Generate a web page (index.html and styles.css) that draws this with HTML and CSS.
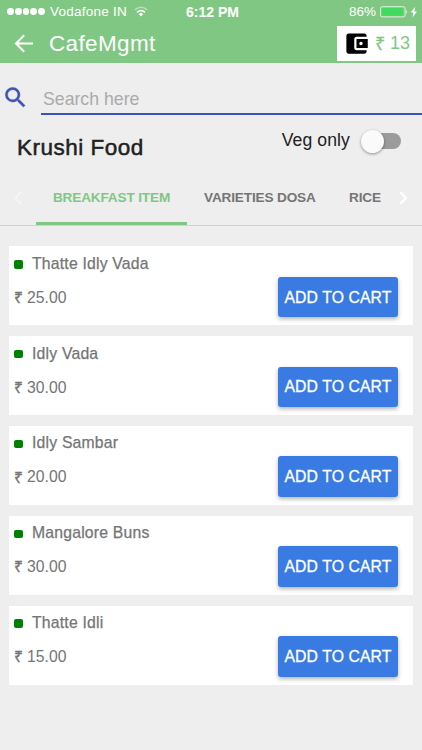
FILE: index.html
```html
<!DOCTYPE html>
<html lang="en">
<head>
<meta charset="utf-8">
<title>CafeMgmt</title>
<link rel="stylesheet" href="styles.css">
</head>
<body>
<header class="header">
  <div class="status">
    <div class="carrier">
      <span class="dots"><i></i><i></i><i></i><i></i><i></i></span>
      <span>Vodafone IN</span>
      <svg class="wifi" width="14" height="11" viewBox="0 0 14 11" fill="none" stroke="#fff" stroke-width="1.5"><path d="M.8 3.8Q7-1.2 13.2 3.8" opacity=".45"/><path d="M3 6.3Q7 3 11 6.3"/><path d="M4.7 8Q7 6.2 9.3 8L7 10.4z" fill="#fff" stroke="none"/></svg>
    </div>
    <div class="clock">6:12 PM</div>
    <div class="power">
      <span>86%</span>
      <svg width="38" height="12" viewBox="0 0 38 12"><rect x=".5" y=".7" width="24.6" height="10.2" rx="1.8" fill="none" stroke="#fff" stroke-opacity=".75"/><rect x="1.7" y="1.9" width="21" height="7.8" rx=".8" fill="#42d95f"/><path d="M26.2 3.800q1.800 2 0 4z" fill="#fff" opacity=".85"/><path d="M35.300.8l-4.600 5.800h2.700l-1 4.800 4.600-6h-2.700z" fill="#fff"/></svg>
    </div>
  </div>
  <div class="toolbar">
    <svg class="back" width="20" height="20" viewBox="0 0 20 20" fill="none" stroke="#fff" stroke-width="2"><path d="M19 10.500H2.500M10.200 2.300L2 10.500l8.200 8.200"/></svg>
    <h1 class="title">CafeMgmt</h1>
    <div class="wallet">
      <svg width="27" height="27" viewBox="0 0 24 24"><path d="M21 18v1c0 1.1-.9 2-2 2H5c-1.11 0-2-.9-2-2V5c0-1.1.89-2 2-2h14c1.1 0 2 .9 2 2v1h-9c-1.11 0-2 .9-2 2v8c0 1.1.89 2 2 2h9zm-9-2h10V8H12v8zm4-2.500c-.83 0-1.500-.67-1.500-1.500s.67-1.500 1.500-1.500 1.500.67 1.500 1.500-.67 1.500-1.500 1.500z"/></svg>
      <span class="balance"><span class="rs">₹</span>13</span>
    </div>
  </div>
</header>
<main>
  <div class="search">
    <svg width="27" height="27" viewBox="0 0 24 24" fill="#3f51b5" stroke="#3f51b5" stroke-width=".4"><path d="M15.500 14h-.79l-.28-.27A6.471 6.471 0 0 0 16 9.500 6.500 6.500 0 1 0 9.500 16c1.610 0 3.090-.59 4.230-1.570l.27.28v.79l5 4.990L20.490 19l-4.990-5zm-6 0C7.010 14 5 11.990 5 9.500S7.010 5 9.500 5 14 7.010 14 9.500 11.990 14 9.500 14z"/></svg>
    <div class="field">Search here</div>
  </div>
  <div class="shop">
    <h2 class="shop-name">Krushi Food</h2>
    <div class="veg"><span>Veg only</span><span class="switch"><i class="thumb"></i></span></div>
  </div>
  <nav class="tabs">
    <svg class="prev" width="8" height="14" viewBox="0 0 8 14" fill="none" stroke="#f5f5f5" stroke-width="2"><path d="M7 1L1.500 7 7 13"/></svg>
    <div class="tab active">BREAKFAST ITEM</div>
    <div class="tab dosa">VARIETIES DOSA</div>
    <div class="tab rice">RICE</div>
    <svg class="next" width="9" height="14" viewBox="0 0 9 14" fill="none" stroke="#fff" stroke-width="2.200"><path d="M1.500 1.300L7 7l-5.500 5.700"/></svg>
  </nav>
  <section class="menu">
    <article class="item"><div><h3 class="name">Thatte Idly Vada</h3><p class="price"><span class="rs">₹</span>25.00</p></div><button class="add">ADD TO CART</button></article>
    <article class="item"><div><h3 class="name">Idly Vada</h3><p class="price"><span class="rs">₹</span>30.00</p></div><button class="add">ADD TO CART</button></article>
    <article class="item"><div><h3 class="name">Idly Sambar</h3><p class="price"><span class="rs">₹</span>20.00</p></div><button class="add">ADD TO CART</button></article>
    <article class="item"><div><h3 class="name">Mangalore Buns</h3><p class="price"><span class="rs">₹</span>30.00</p></div><button class="add">ADD TO CART</button></article>
    <article class="item"><div><h3 class="name">Thatte Idli</h3><p class="price"><span class="rs">₹</span>15.00</p></div><button class="add">ADD TO CART</button></article>
  </section>
</main>
</body>
</html>
```
FILE: styles.css
```css
* { box-sizing: border-box; margin: 0; padding: 0; }
body {
  width: 422px;
  height: 750px;
  overflow: hidden;
  background: #eee;
  font-family: "Liberation Sans", Arial, sans-serif;
  color: #212121;
  white-space: nowrap;
}
svg { display: block; flex: none; }
.header { height: 63px; background: #81c784; color: #fff; }
.status {
  height: 23px;
  display: grid;
  grid-template-columns: 1fr 54px 1fr;
  align-items: center;
  padding: 0 4px 0 7px;
  font-size: 13.5px;
}
.carrier, .power { display: flex; align-items: center; }
.carrier { letter-spacing: .25px; }
.dots { display: flex; gap: .9px; width: 43px; }
.dots i { width: 6.9px; height: 6.9px; border-radius: 50%; background: #fff; }
.wifi { margin-left: 7px; }
.clock { font-size: 14px; font-weight: bold; text-align: center; }
.power { justify-content: flex-end; gap: 4px; }
.toolbar { display: flex; align-items: center; height: 40px; padding: 0 6px 0 14px; }
.title {
  margin-left: 15px;
  padding-top: 1px;
  font-size: 22.5px;
  font-weight: normal;
  letter-spacing: .35px;
}
.wallet {
  width: 79px;
  height: 35px;
  margin-left: auto;
  padding-left: 6px;
  display: flex;
  align-items: center;
  gap: 5px;
  background: #fff;
  color: #81c784;
  font-size: 18px;
}
.balance { display: flex; align-items: center; }
.search { display: flex; height: 52px; padding: 21px 0 0 2px; }
.field {
  flex: 1;
  height: 31px;
  margin-left: 12px;
  padding: 5px 0 0 2px;
  border-bottom: 2px solid #3f51b5;
  color: #aaa;
  font-size: 17.7px;
  line-height: 20px;
}
.shop { display: flex; justify-content: space-between; height: 55px; padding: 0 21px 0 17px; }
.shop-name {
  padding-top: 19px;
  font-size: 22.5px;
  font-weight: normal;
  line-height: 27px;
  letter-spacing: .5px;
  -webkit-text-stroke: .5px #212121;
}
.veg { display: flex; height: 50px; align-items: center; font-size: 17.6px; letter-spacing: .1px; }
.switch {
  display: flex;
  align-items: center;
  width: 38px;
  height: 16px;
  margin: 2px 0 0 13px;
  border-radius: 8px;
  background: #9b9b9b;
}
.thumb {
  width: 23px;
  height: 23px;
  margin-left: -2px;
  border-radius: 50%;
  background: #fafafa;
  box-shadow: 0 1px 3px rgba(0,0,0,.4);
}
.tabs {
  display: flex;
  align-items: center;
  height: 56px;
  padding-left: 14px;
  border-bottom: 1px solid #d2d2d2;
  color: #757575;
  font-size: 13.6px;
  font-weight: bold;
  letter-spacing: -.15px;
}
.tab { width: 151px; height: 55px; line-height: 56px; text-align: center; }
.prev { margin-right: 14px; }
.active { color: #81c784; border-bottom: 3px solid #81c784; }
.dosa { padding-left: 17px; text-align: left; }
.rice { width: 61px; padding-left: 11px; text-align: left; }
.menu { display: grid; gap: 10.8px; padding: 20.4px 9px 0; }
.item {
  display: flex;
  justify-content: space-between;
  height: 79px;
  padding: 0 15px 0 5px;
  background: #fff;
  color: #757575;
}
.name {
  display: flex;
  align-items: center;
  height: 35px;
  font-size: 15.75px;
  font-weight: normal;
  letter-spacing: .2px;
  -webkit-text-stroke: .25px #757575;
}
.name::before {
  content: "";
  width: 8.5px;
  height: 8.5px;
  margin: 1px 9.5px 0 0;
  border-radius: 2px;
  background: #008000;
}
.price { display: flex; height: 33px; align-items: center; font-size: 15.75px; }
.rs { width: 13px; font-family: "Noto Sans", "Liberation Sans", sans-serif; line-height: 1; -webkit-text-stroke: .3px currentColor; }
.balance .rs { width: 15px; }
.add {
  width: 120px;
  height: 40.5px;
  margin-top: 30.5px;
  padding-top: 1px;
  border: 0;
  border-radius: 3px;
  background: #397be3;
  box-shadow: 0 2px 4px rgba(0,0,0,.3);
  color: #fff;
  font: 15.75px "Liberation Sans", Arial, sans-serif;
  letter-spacing: .1px;
  -webkit-text-stroke: .3px #fff;
}
```
